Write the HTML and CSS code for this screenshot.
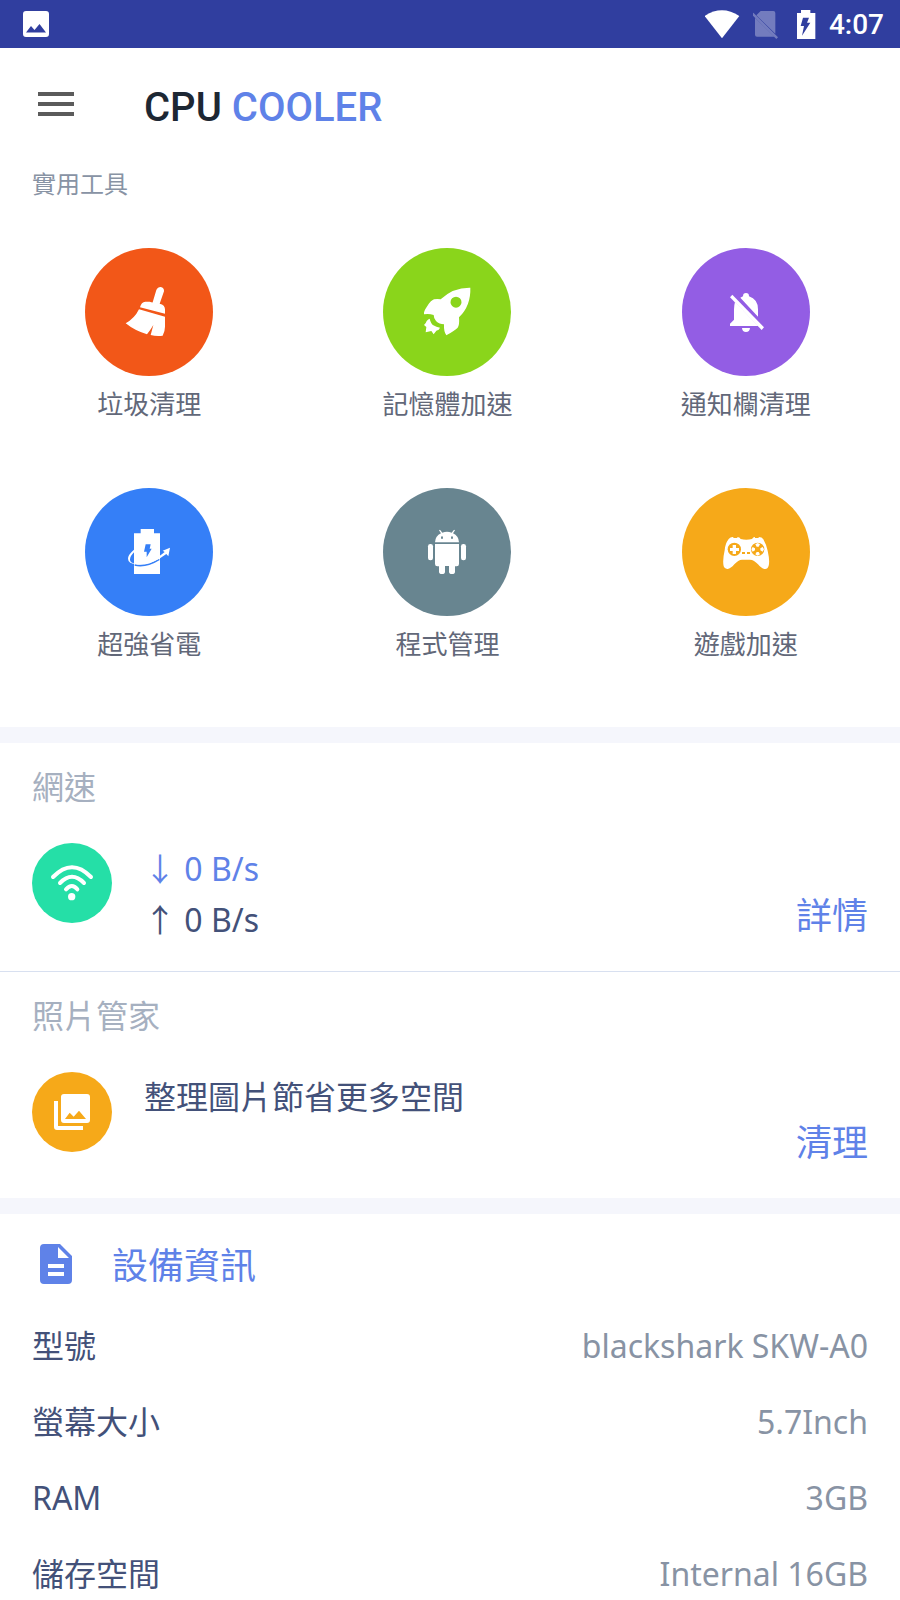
FILE: index.html
```html
<!DOCTYPE html>
<html lang="zh-Hant">
<head>
<meta charset="utf-8">
<meta name="viewport" content="width=device-width, initial-scale=1">
<title>CPU Cooler</title>
<link rel="stylesheet" href="styles.css">
</head>
<body>
<div class="status-bar">
  <svg class="status-photo" viewBox="0 0 26 26" aria-hidden="true"><path fill="#fff" fill-rule="evenodd" d="M3 0h20a3 3 0 0 1 3 3v20a3 3 0 0 1-3 3H3a3 3 0 0 1-3-3V3a3 3 0 0 1 3-3zM3 21.500h20L16.500 13l-5 6L8 15z"/></svg>
  <div class="status-icons">
    <svg width="36" height="29" viewBox="75 29 108 87" aria-hidden="true"><path fill="#fff" d="M74 47Q126 13 178 47L126 114z"/></svg>
    <svg width="32" height="29" viewBox="219 30 96 87" aria-hidden="true"><g fill="#fff" opacity=".32"><path d="M242 33h38q6 0 6 6v62L229 46zM225 53l58 57h-52q-6 0-6-6z"/><path d="M220 38l74 74-5 5-74-74z"/></g></svg>
    <svg width="20" height="29" viewBox="350 27 60 87" aria-hidden="true"><path fill="#fff" fill-rule="evenodd" d="M362 27h28v9h15v78h-57V36h14zM368 50l-7 25h10l-6 29 25-39h-10l6-15z"/></svg>
    <span class="clock">4:07</span>
  </div>
</div>

<header class="app-bar">
  <button class="menu-button" type="button" aria-label="Menu"><span></span><span></span><span></span></button>
  <h1 class="app-title">CPU <span class="accent">COOLER</span></h1>
</header>

<main>
  <section class="tools">
    <h2 class="tools-heading">實用工具</h2>
    <div class="tool-grid">
      <button class="tool" type="button">
        <svg class="tool-icon orange" viewBox="15 24 384 384" aria-hidden="true"><g fill="#fff"><path d="M229 150q4-9 13-9 11 2 10 13l-13 37q16 4 16 17v13l-75-19q4-16 16-17h13q8 3 9 2z"/><path d="M177 208l78 22v30q0 14-7 27-20 2-36-2l8-30q-10 17-19 28-37-11-64-33 27-15 40-42z"/></g></svg>
        <span>垃圾清理</span>
      </button>
      <button class="tool" type="button">
        <svg class="tool-icon green" viewBox="27 24 384 384" aria-hidden="true"><path fill="#fff" fill-rule="evenodd" d="M289 143q2 54-34 89 2 23-4 31-8 8-34 23-8-10-7-33-14 0-24-10-7-8-7-18-14-5-29-2-2-8 10-25 10-16 20-20 10-2 20 0 37-36 89-35zM246 170a16.500 16.500 0 1 0 0 33 16.500 16.500 0 0 0 0-33z"/><path fill="#fff" d="M167 236q4 16 11 20 9 6 20 7-2 7-11 9l-8 11-7-10-17 4 2-16-7-6q6-5 8-12 5-6 9-7z"/></svg>
        <span>記憶體加速</span>
      </button>
      <button class="tool" type="button">
        <svg class="tool-icon purple" viewBox="36 24 384 384" aria-hidden="true"><g fill="#fff"><path d="M187 164l95 98-7 8-95-98z"/><path d="M211 173q4-2 8-4 0-10 9-10t9 10q27 9 27 39v22zM195 186l70 72h-85v-7l12-12v-31q0-12 3-22zM216 264h24q-1 12-12 12t-12-12z"/></g></svg>
        <span>通知欄清理</span>
      </button>
      <button class="tool" type="button">
        <svg class="tool-icon blue" viewBox="15 24 384 384" aria-hidden="true"><path fill="#fff" d="M182 147h40v13h18v122h-78V160h20z"/><path fill="#357ff7" d="M197 193h15l-3 13h6l-15 26v-17h-8z"/><path fill="none" stroke="#357ff7" stroke-width="5" d="M164 255q34 8 74-17"/><path fill="#fff" d="M162 209v8q-12 12-12 22 0 12 22 11 48-2 82-34l-6-4 22-9-5 26-6-7q-44 34-88 31-27-2-27-17 0-12 18-27z"/></svg>
        <span>超強省電</span>
      </button>
      <button class="tool" type="button">
        <svg class="tool-icon slate" viewBox="27 24 384 384" aria-hidden="true"><g fill="#fff"><path fill-rule="evenodd" d="M183 187q1-19 18-27l-6-9 3-2 7 9q14-5 28 0l7-9 3 2-6 9q17 8 18 27zM201 173a3 4 0 1 0 6 0 3 4 0 1 0-6 0M231 173a3 4 0 1 0 6 0 3 4 0 1 0-6 0"/><path d="M183 192h72v60q0 7-7 7h-5v16q0 7-9 7t-9-7v-17h-12v17q0 7-9 7t-9-7v-16h-5q-7 0-7-7z"/><rect x="162" y="192" width="15" height="49" rx="7"/><rect x="261" y="192" width="15" height="49" rx="7"/></g></svg>
        <span>程式管理</span>
      </button>
      <button class="tool" type="button">
        <svg class="tool-icon amber" viewBox="36 24 384 384" aria-hidden="true"><path fill="#fff" d="M176 177q6-7 14-6v3h12v-3q7 0 10 6 16 5 34 0 3-6 9-6v3h11v-3q10 0 14 7 9 16 13 34 7 31 3 45-4 13-15 9-7-1-17-13-12-14-24-14h-24q-11 0-23 14-11 13-20 14-9 1-12-8-4-17 3-48 1-19 12-34z"/><g fill="#f6a919"><circle cx="193" cy="208" r="20"/><circle cx="263" cy="208" r="20"/><path d="M216 216h9v6h-9zM231 216h9v6h-9z"/></g><path fill="#fff" d="M188 195h10v9h9v9h-9v9h-10v-9h-8v-9h8zM256 193l7-4 7 4-4 7h-6zM256 223l7 4 7-4-4-7h-6zM248 201l-4 7 4 7 7-4v-6zM278 201l4 7-4 7-7-4v-6z"/></svg>
        <span>遊戲加速</span>
      </button>
    </div>
  </section>

  <section class="card divided">
    <h2 class="card-heading">網速</h2>
    <div class="card-row">
      <svg class="card-icon mint" viewBox="96 369 240 240" aria-hidden="true"><g fill="none" stroke="#fff" stroke-width="12" stroke-linecap="round"><path d="M159 471q57-59 114 0M180 489q36-37 72 0M198 508q18-20 34 0"/></g><circle cx="215" cy="530" r="11" fill="#fff"/></svg>
      <div class="card-text speeds">
        <div class="accent">↓ 0 B/s</div>
        <div>↑ 0 B/s</div>
      </div>
      <a class="card-link" href="#network">詳情</a>
    </div>
  </section>

  <section class="card">
    <h2 class="card-heading">照片管家</h2>
    <div class="card-row">
      <svg class="card-icon amber" viewBox="96 276 240 240" aria-hidden="true"><path fill="#fff" fill-rule="evenodd" d="M192 342h69q9 0 9 9v69q0 9-9 9h-69q-9 0-9-9v-69q0-9 9-9zM195 417h63l-21-25-16 18-12-12z"/><path fill="#fff" d="M162 363h12v75h75v12h-78q-9 0-9-9z"/></svg>
      <div class="card-text">整理圖片節省更多空間</div>
      <a class="card-link" href="#photos">清理</a>
    </div>
  </section>

  <section class="device">
    <div class="device-header">
      <svg class="device-icon" viewBox="0 0 24 24" aria-hidden="true"><path fill="#5f82e8" fill-rule="evenodd" d="M14 2H6a2 2 0 0 0-2 2v16a2 2 0 0 0 2 2h12a2 2 0 0 0 2-2V8zM16 18H8v-2h8zM16 14H8v-2h8zM13 9V3.500L18.500 9z"/></svg>
      <h2 class="device-title">設備資訊</h2>
    </div>
    <dl class="specs">
      <div class="spec"><dt>型號</dt><dd>blackshark SKW-A0</dd></div>
      <div class="spec"><dt>螢幕大小</dt><dd>5.7Inch</dd></div>
      <div class="spec"><dt>RAM</dt><dd>3GB</dd></div>
      <div class="spec"><dt>儲存空間</dt><dd>Internal 16GB</dd></div>
    </dl>
  </section>
</main>
</body>
</html>
```
FILE: styles.css
```css
* { box-sizing: border-box; }

body {
  margin: 0;
  background: #fff;
  color: #435179;
  font-family: "Noto Sans", "Noto Sans CJK TC", sans-serif;
  font-size: 32px;
}

h1, h2, dl, dd { margin: 0; font-weight: 400; }
svg { display: block; flex: none; }
button { border: 0; padding: 0; background: none; font: inherit; cursor: pointer; }
.accent { color: #5f82e8; }

.status-bar {
  display: flex;
  align-items: center;
  justify-content: space-between;
  height: 48px;
  padding: 0 16px 0 23px;
  background: #303e9f;
}
.status-photo { width: 26px; height: 26px; }
.status-icons { display: flex; align-items: center; gap: 12px; }
.clock {
  padding-top: 2px;
  color: #fff;
  font-family: Roboto, sans-serif;
  font-size: 28px;
  font-weight: 500;
  line-height: 32px;
}

.app-bar {
  display: flex;
  align-items: center;
  gap: 70px;
  height: 112px;
  padding: 0 32px 0 38px;
}
.menu-button { display: grid; gap: 6px; width: 36px; }
.menu-button span { height: 4px; background: #5b5b5b; }
.app-title {
  padding-top: 8px;
  color: #1d2733;
  font-family: Roboto, sans-serif;
  font-size: 40px;
  font-weight: 500;
  line-height: 48px;
}

.tools { border-bottom: 16px solid #f5f6fc; padding-bottom: 59px; }
.tools-heading {
  padding: 0 32px;
  color: #8893a4;
  font-size: 24px;
  line-height: 48px;
}
.tool-grid {
  display: grid;
  grid-template-columns: repeat(3, 1fr);
  row-gap: 60px;
  padding: 40px 5px 0 0;
}
.tool {
  display: flex;
  flex-direction: column;
  align-items: center;
  gap: 4px;
  color: #626879;
  font-size: 26px;
  line-height: 48px;
}
.tool-icon { width: 128px; height: 128px; border-radius: 50%; }
.orange { background: #f25718; }
.green { background: #8ad51b; }
.purple { background: #935de4; }
.blue { background: #357ff7; }
.slate { background: #688590; }
.amber { background: #f6a919; }
.mint { background: #25dfa7; }

.card { padding: 20px 32px 26px; }
.divided { border-bottom: 1px solid #d8e0f0; }
.card-heading { color: #a6b0c0; font-size: 32px; line-height: 48px; }
.card-row { display: flex; gap: 32px; min-height: 100px; margin-top: 32px; }
.card-icon { width: 80px; height: 80px; border-radius: 50%; }
.card-text { flex: 1; line-height: 50px; }
.speeds { line-height: 51px; }
.card-link {
  align-self: flex-end;
  color: #5f82e8;
  font-size: 36px;
  line-height: 58px;
  text-decoration: none;
}

.device { border-top: 16px solid #f5f6fc; padding: 24px 32px 0; }
.device-header { display: flex; align-items: center; gap: 32px; height: 52px; }
.device-icon { width: 48px; height: 50px; }
.device-title { padding-top: 4px; color: #5f82e8; font-size: 36px; line-height: 52px; }
.specs { display: grid; gap: 28px; margin-top: 32px; }
.spec { display: flex; justify-content: space-between; line-height: 48px; }
.spec dd { color: #8893a4; }
```
